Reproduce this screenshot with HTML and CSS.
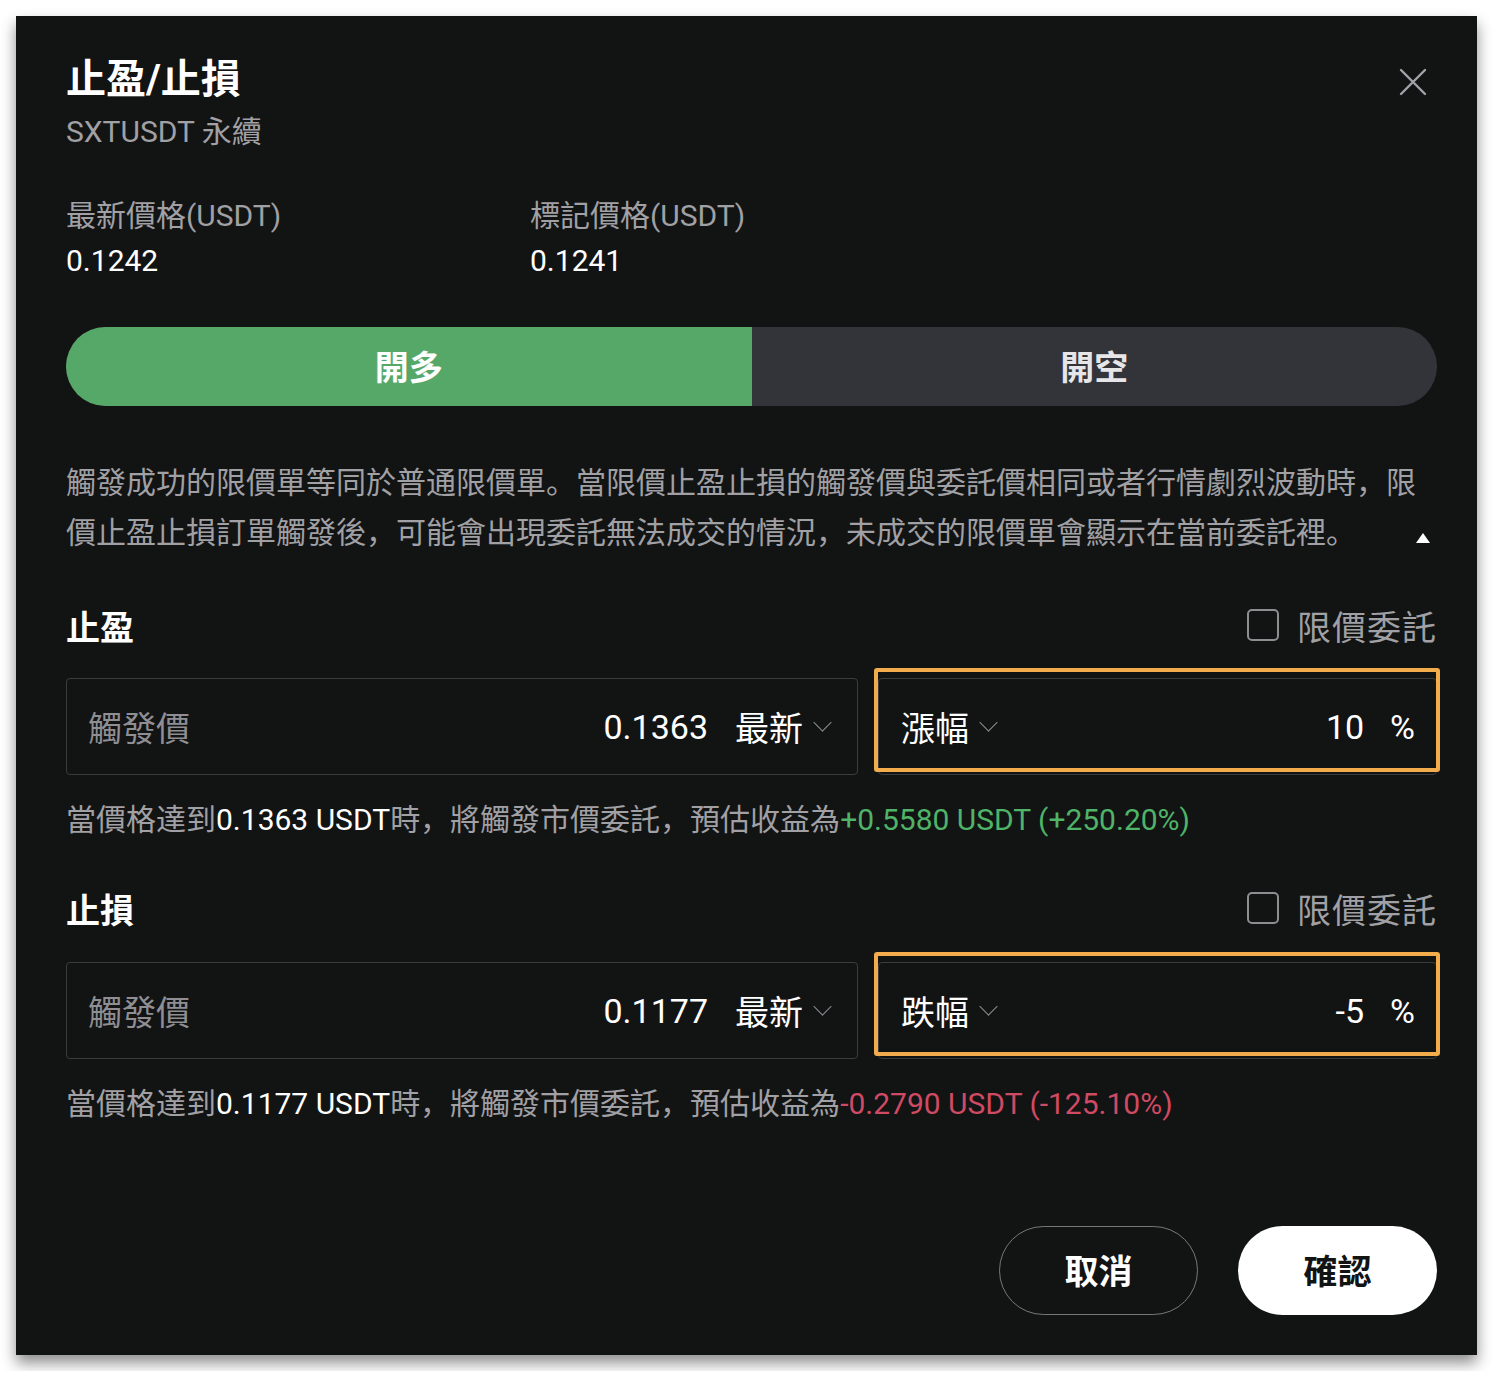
FILE: index.html
```html
<!DOCTYPE html>
<html>

<head>
    <title>止盈/止損</title>
    <link rel="stylesheet" href="styles.css">
</head>

<body>
    <div class="modal">
        <div class="header">
            <div>
                <div class="title">止盈/止損</div>
                <div class="subtitle">SXTUSDT 永續</div>
            </div>
            <button class="close">
                <svg width="28" height="28" viewBox="0 0 28 28">
                    <path d="M2 2L26 26M26 2L2 26" stroke="#a2a2a8" stroke-width="2.4" stroke-linecap="round" fill="none" />
                </svg>
            </button>
        </div>

        <div class="prices">
            <div class="price">
                <div class="price-label">最新價格(USDT)</div>
                <div class="price-value">0.1242</div>
            </div>
            <div class="price">
                <div class="price-label">標記價格(USDT)</div>
                <div class="price-value">0.1241</div>
            </div>
        </div>

        <div class="side-toggle">
            <div class="side long active">開多</div>
            <div class="side short">開空</div>
        </div>

        <div class="notice">
            <p>觸發成功的限價單等同於普通限價單。當限價止盈止損的觸發價與委託價相同或者行情劇烈波動時，限<br>價止盈止損訂單觸發後，可能會出現委託無法成交的情況，未成交的限價單會顯示在當前委託裡。</p>
            <span class="collapse"></span>
        </div>

        <!-- take profit -->
        <div class="section">
            <div class="section-head">
                <span class="section-title">止盈</span>
                <label class="limit"><span class="checkbox"></span>限價委託</label>
            </div>
            <div class="inputs">
                <div class="field">
                    <span class="field-label">觸發價</span>
                    <span class="field-value">0.1363</span>
                    <span class="select">最新<span class="chevron"></span></span>
                </div>
                <div class="field ratio">
                    <span class="highlight"></span>
                    <span class="select">漲幅<span class="chevron"></span></span>
                    <span class="field-value">10</span>
                    <span class="unit">%</span>
                </div>
            </div>
            <div class="hint">當價格達到<span class="em">0.1363 USDT</span>時，將觸發市價委託，預估收益為<span class="up">+0.5580 USDT (+250.20%)</span></div>
        </div>

        <!-- stop loss -->
        <div class="section">
            <div class="section-head">
                <span class="section-title">止損</span>
                <label class="limit"><span class="checkbox"></span>限價委託</label>
            </div>
            <div class="inputs">
                <div class="field">
                    <span class="field-label">觸發價</span>
                    <span class="field-value">0.1177</span>
                    <span class="select">最新<span class="chevron"></span></span>
                </div>
                <div class="field ratio">
                    <span class="highlight"></span>
                    <span class="select">跌幅<span class="chevron"></span></span>
                    <span class="field-value">-5</span>
                    <span class="unit">%</span>
                </div>
            </div>
            <div class="hint">當價格達到<span class="em">0.1177 USDT</span>時，將觸發市價委託，預估收益為<span class="down">-0.2790 USDT (-125.10%)</span></div>
        </div>

        <div class="actions">
            <button class="btn btn-cancel">取消</button>
            <button class="btn btn-confirm">確認</button>
        </div>
    </div>
</body>

</html>
```

FILE: styles.css
```css
body {
    margin: 0;
    background-color: #fff;
    font-family: Roboto, "Noto Sans CJK SC", sans-serif;
}

.modal {
    margin: 16px;
    width: 1461px;
    height: 1339px;
    box-sizing: border-box;
    padding: 39px 40px 0 50px;
    background-color: #121313;
    box-shadow: 0 8px 14px rgba(0, 0, 0, 0.45);
}

.header {
    display: flex;
    justify-content: space-between;
    align-items: flex-start;
}

.title {
    font-size: 40px;
    line-height: 50px;
    font-weight: 700;
    color: #fff;
}

.subtitle {
    margin-top: 7px;
    font-size: 30px;
    line-height: 40px;
    color: #a0a0a5;
}

.close {
    width: 40px;
    height: 40px;
    margin: 7px 4px 0 0;
    padding: 0;
    border: none;
    background: none;
    display: flex;
    align-items: center;
    justify-content: center;
}

.prices {
    display: flex;
    margin-top: 44px;
}

.price {
    width: 464px;
}

.price-label {
    font-size: 30px;
    line-height: 40px;
    color: #a0a0a5;
}

.price-value {
    margin-top: 5px;
    font-size: 30px;
    line-height: 40px;
    color: #fff;
}

.side-toggle {
    display: flex;
    margin-top: 46px;
    height: 79px;
    border-radius: 40px;
    overflow: hidden;
    background-color: #333439;
}

.side {
    flex: 1;
    display: flex;
    align-items: center;
    justify-content: center;
    padding-bottom: 3px;
    font-size: 34px;
    font-weight: 700;
    color: #e6e6e8;
}

.side.active {
    background-color: #56a869;
    color: #fff;
}

.notice {
    display: flex;
    align-items: flex-end;
    justify-content: space-between;
    margin-top: 52px;
}

.notice p {
    margin: 0;
    font-size: 30px;
    line-height: 50px;
    color: #a0a0a5;
    white-space: nowrap;
}

.collapse {
    width: 0;
    height: 0;
    margin: 0 10px 15px 0;
    border-left: 7px solid transparent;
    border-right: 7px solid transparent;
    border-bottom: 10px solid #fff;
}

.section-head {
    display: flex;
    justify-content: space-between;
    align-items: center;
    margin-top: 45px;
    height: 44px;
}

.section + .section .section-head {
    margin-top: 46px;
}

.section-title {
    font-size: 34px;
    font-weight: 700;
    color: #fff;
}

.limit {
    display: flex;
    align-items: center;
    font-size: 34px;
    letter-spacing: 1px;
    color: #a0a0a5;
}

.checkbox {
    width: 28px;
    height: 28px;
    margin-right: 18px;
    border: 2px solid #8d8d92;
    border-radius: 5px;
}

.inputs {
    display: grid;
    grid-template-columns: 792px 1fr;
    gap: 20px;
    margin-top: 31px;
}

.section + .section .inputs {
    margin-top: 32px;
}

.field {
    position: relative;
    display: flex;
    align-items: center;
    height: 97px;
    box-sizing: border-box;
    padding: 0 28px 0 21px;
    border: 1px solid #3b3c40;
    border-radius: 4px;
    font-size: 34px;
    color: #fff;
}

.field-label {
    flex: 1;
    color: #8e8e93;
}

.field-value {
    margin-right: 27px;
}

.ratio {
    padding: 0 21px 0 22px;
}

.ratio .select {
    flex: 1;
}

.ratio .field-value {
    margin-right: 26px;
}

.select {
    display: flex;
    align-items: center;
}

.chevron {
    width: 12px;
    height: 12px;
    margin: -9px 0 0 13px;
    border-right: 1.5px solid #8e8e93;
    border-bottom: 1.5px solid #8e8e93;
    transform: rotate(45deg);
}

.highlight {
    position: absolute;
    left: -5px;
    top: -11px;
    right: -4px;
    bottom: 2px;
    border: 4px solid #f2ac4c;
    border-radius: 3px;
}

.hint {
    margin-top: 25px;
    font-size: 30px;
    line-height: 40px;
    color: #a0a0a5;
    white-space: nowrap;
}

.hint .em {
    color: #fff;
}

.hint .up {
    color: #4fb368;
}

.hint .down {
    color: #cf4a63;
}

.actions {
    display: flex;
    justify-content: flex-end;
    gap: 40px;
    margin-top: 102px;
}

.btn {
    width: 199px;
    height: 89px;
    border-radius: 45px;
    padding-bottom: 3px;
    font-family: Roboto, "Noto Sans CJK SC", sans-serif;
    font-size: 34px;
    font-weight: 700;
    cursor: pointer;
}

.btn-cancel {
    background: none;
    border: 1.5px solid #77777c;
    color: #fff;
}

.btn-confirm {
    background-color: #fff;
    border: none;
    color: #121313;
}
```
